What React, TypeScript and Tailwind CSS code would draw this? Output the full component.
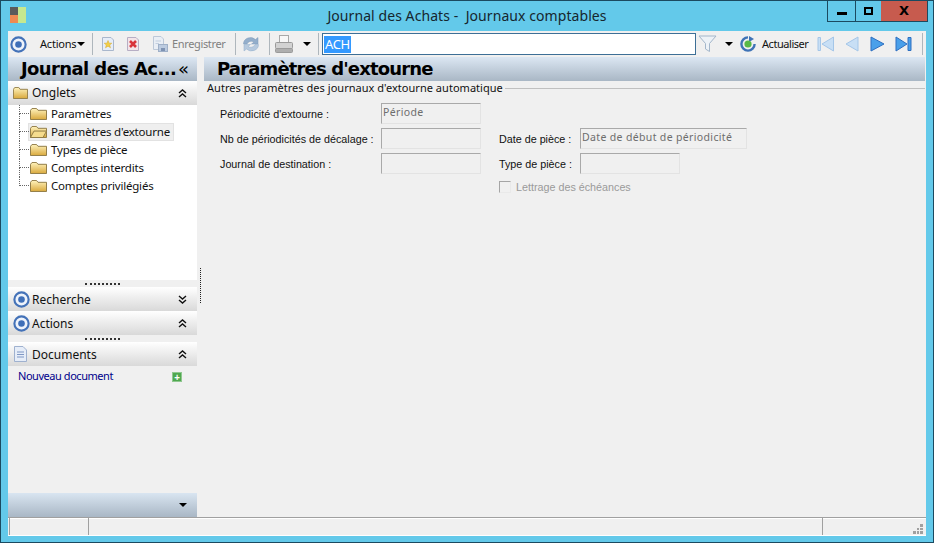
import React from "react";

const F = "font-['Noto_Sans','Liberation_Sans',sans-serif]";

function Target({ size = 17 }: { size?: number }) {
  return (
    <svg width={size} height={size} viewBox="0 0 16 16" className="shrink-0">
      <circle cx="8" cy="8" r="6.7" fill="#eef3fb" stroke="#4472b8" strokeWidth="2" />
      <circle cx="8" cy="8" r="3.1" fill="#3f6fb8" />
    </svg>
  );
}

function Folder({ open = false, w = 17, h = 12 }: { open?: boolean; w?: number; h?: number }) {
  return (
    <svg width={w} height={h} viewBox="0 0 17 13" preserveAspectRatio="none" className="shrink-0">
      <defs>
        <linearGradient id="fg" x1="0" y1="0" x2="0" y2="1">
          <stop offset="0" stopColor="#fff3bd" />
          <stop offset="1" stopColor="#d9a93d" />
        </linearGradient>
      </defs>
      <path d="M.5 2.5V12.5H16.5V2.5H8L6.5.5H2L.5 2.5Z" fill="url(#fg)" stroke="#8f7a45" />
      {open && <path d="M.5 12.5L4 5.5H16.5L13 12.5Z" fill="#f5dc8e" stroke="#8f7a45" />}
    </svg>
  );
}

function Chevrons({ down = false }: { down?: boolean }) {
  return (
    <svg width="9" height="9" viewBox="0 0 9 9" className={down ? "rotate-180" : ""}>
      <path d="M1 4L4.5 1L8 4M1 8L4.5 5L8 8" fill="none" stroke="#111" strokeWidth="1.4" />
    </svg>
  );
}

function Caret() {
  return <span className="block shrink-0 w-0 h-0 border-x-[4px] border-x-transparent border-t-[4px] border-t-black" />;
}

function Sep() {
  return <span className="block w-px h-[22px] bg-[#aeb6bc] shrink-0" />;
}

function NavIcon({ d, w, on }: { d: string; w: number; on?: boolean }) {
  return (
    <svg width={w} height="16" viewBox={`0 0 ${w} 16`} className="shrink-0">
      <path d={d} fill={on ? "#4aa0ea" : "#c8dff5"} stroke={on ? "#2e6fc0" : "#a4c6e8"} strokeWidth="1" />
    </svg>
  );
}

function Header({ icon, label, down, low = true }: { icon: React.ReactNode; label: string; down?: boolean; low?: boolean }) {
  return (
    <div className="h-6 shrink-0 flex items-center pl-[5px] pr-[10px] bg-gradient-to-b from-white to-[#d9d9d9] text-[12px] text-[#111]">
      <span className="w-[19px] flex">{icon}</span>
      <span className={`flex-1 ${low ? "pt-[2px]" : ""}`}>{label}</span>
      <Chevrons down={down} />
    </div>
  );
}

function Grip() {
  return (
    <div className="h-[7px] shrink-0 flex justify-center items-center">
      <div className="w-[35px] border-t-2 border-dotted border-[#333]" />
    </div>
  );
}

function TreeItem({ label, open, active, last }: { label: string; open?: boolean; active?: boolean; last?: boolean }) {
  return (
    <div className="h-[18px] flex items-center relative pl-[21px]">
      <div className="absolute left-[11px] top-0 w-[10px] h-[9px] border-l border-b border-dotted border-[#666]" />
      {!last && <div className="absolute left-[11px] top-[9px] h-[9px] border-l border-dotted border-[#666]" />}
      <div className={`flex items-center gap-[4px] h-[18px] pl-[1px] pr-[3px] ${active ? "bg-[#efefef] border border-[#e2e2e2] -ml-px" : ""}`}>
        <Folder open={open} />
        <span className="text-[11.5px] tracking-[-0.2px] text-[#111] whitespace-nowrap">{label}</span>
      </div>
    </div>
  );
}

function Field({ text, w = "w-[100px]" }: { text?: string; w?: string }) {
  return (
    <div className={`${w} h-[21px] bg-[#f0f0f0] border border-[#a9a9a9] border-r-[#e3e3e3] border-b-[#e3e3e3] px-[1px] text-[10.5px] tracking-[0.35px] text-[#6d6d6d] leading-[17px] whitespace-nowrap ${F}`}>
      {text}
    </div>
  );
}

export default function App() {
  return (
    <div className={`${F} w-[934px] h-[543px] bg-[#63c9ea] border border-[#1b4a60] flex flex-col overflow-hidden relative`}>
      {/* Title bar */}
      <div className="h-[30px] flex items-center relative shrink-0">
        <div className="ml-[9px] mb-[3px] w-4 h-4 grid grid-cols-2 grid-rows-2">
          <span className="bg-[#5b5b5b]" />
          <span className="bg-[#c6e88f] row-span-2" />
          <span className="bg-[#ef8a52]" />
        </div>
        <div className="absolute inset-x-0 top-[4px] text-center text-[14px] tracking-[0.07px] text-[#16262e]">
          Journal des Achats -&nbsp; Journaux comptables
        </div>
        <div className="absolute right-[5px] top-[-1px] flex h-[22px] border border-[#1b4a60] border-t-0">
          <div className="w-[28px] flex items-center justify-center border-r border-[#1b4a60]">
            <span className="w-[10px] h-[3px] bg-black mt-[5px]" />
          </div>
          <div className="w-[25px] flex items-center justify-center">
            <span className="w-[9px] h-[8px] border-2 border-black" />
          </div>
          <div className="w-[46px] flex items-center justify-center bg-[#c75b4e] text-[13px] font-bold text-black font-['DejaVu_Sans'] leading-none">
            X
          </div>
        </div>
      </div>

      {/* Toolbar */}
      <div className="mx-[7px] h-[26px] bg-[#f0f0f0] flex items-center shrink-0 pl-[2px] text-[11px] text-[#111]">
        <Target />
        <span className="ml-[13px] w-[36px] tracking-[-0.2px] whitespace-nowrap">Actions</span>
        <span className="ml-[1px] mr-[7px]"><Caret /></span>
        <Sep />
        <svg width="16" height="16" viewBox="0 0 16 16" className="ml-[7px] shrink-0">
          <path d="M2.5 1.5H11L13.5 4V14.5H2.5Z" fill="#e6edf8" stroke="#a9b7cc" />
          <path d="M8 4.5L9.1 7.2H11.8L9.7 9L10.5 11.8L8 10.2L5.5 11.8L6.3 9L4.2 7.2H6.9Z" fill="#f3cf45" stroke="#d7a92b" strokeWidth="0.5" />
        </svg>
        <svg width="16" height="16" viewBox="0 0 16 16" className="ml-[9px] shrink-0">
          <path d="M2.5 1.5H11L13.5 4V14.5H2.5Z" fill="#f3e4e8" stroke="#b7aec4" />
          <path d="M5 5L11 11M11 5L5 11" stroke="#d8323a" strokeWidth="2.6" />
        </svg>
        <svg width="16" height="16" viewBox="0 0 16 16" className="ml-[11px] shrink-0">
          <path d="M1.5 .5H9L11.5 3V13.5H1.5Z" fill="#e9eef5" stroke="#bcc8d8" />
          <path d="M3.5 5H9M3.5 7.5H7" stroke="#c3cfdf" />
          <rect x="6.5" y="8.5" width="9" height="7" fill="#bccbe0" stroke="#9fb0c8" />
          <rect x="9" y="12" width="4" height="3" fill="#7f93b3" />
        </svg>
        <span className="ml-[4px] w-[54px] text-[#808080] tracking-[-0.35px] whitespace-nowrap">Enregistrer</span>
        <span className="ml-[9px]"><Sep /></span>
        <svg width="18" height="18" viewBox="0 0 18 18" className="ml-[6px] shrink-0">
          <path d="M1.5 9A7 6.5 0 0 1 13.5 4.5L16 2.5V9H9.5L12 7A4.5 4 0 0 0 5 9Z" fill="#93aecb" stroke="#7d99b8" strokeWidth="0.5" />
          <path d="M16.5 9.5A7 6.5 0 0 1 4.5 14L2 16V9.5H8.5L6 11.5A4.5 4 0 0 0 13 9.5Z" fill="#b6c9de" stroke="#93aecb" strokeWidth="0.5" />
        </svg>
        <span className="ml-[9px]"><Sep /></span>
        <svg width="18" height="18" viewBox="0 0 18 18" className="ml-[5px] shrink-0">
          <rect x="4.5" y=".5" width="9" height="7" fill="#f7f7f7" stroke="#a8a8a8" />
          <rect x=".5" y="7.5" width="17" height="6" rx="1" fill="#d2d2d2" stroke="#9a9a9a" />
          <rect x=".5" y="13.5" width="17" height="4" rx="1" fill="#aeaeae" stroke="#9a9a9a" />
        </svg>
        <span className="ml-[10px]"><Caret /></span>
        <span className="ml-[7px]"><Sep /></span>
        <div className="ml-[3px] w-[374px] h-[22px] shrink-0 bg-white border border-[#3d6f96] flex items-center pl-[1px]">
          <span className="bg-[#3399ff] text-white text-[13px] leading-[17px] px-[1px] tracking-[-0.4px]">ACH</span>
        </div>
        <svg width="19" height="18" viewBox="0 0 19 18" className="ml-[2px] shrink-0">
          <path d="M1 1H18L11.5 8.5V16.5L7.5 14V8.5Z" fill="#edf2f7" stroke="#a3b6ca" />
        </svg>
        <span className="ml-[8px]"><Caret /></span>
        <svg width="16" height="16" viewBox="0 0 16 16" className="ml-[7px] shrink-0">
          <path d="M8 1.4A6.6 6.6 0 1 0 14.6 8" fill="none" stroke="#3f73b6" strokeWidth="2.4" />
          <path d="M9 0L14 3L9 6Z" fill="#3f73b6" />
          <circle cx="8" cy="8" r="3.6" fill="#58b947" />
        </svg>
        <span className="ml-[6px] w-[46px] tracking-[-0.45px] whitespace-nowrap">Actualiser</span>
        <span className="ml-[9px]"><NavIcon w={18} d="M1 1.5H3.5V14.5H1ZM16.5 1L5 8L16.5 15Z" /></span>
        <span className="ml-[10px]"><NavIcon w={14} d="M13 1L1 8L13 15Z" /></span>
        <span className="ml-[11px]"><NavIcon w={15} on d="M1 1L14 8L1 15Z" /></span>
        <span className="ml-[10px]"><NavIcon w={17} on d="M1 1L12 8L1 15ZM13 1.5H16V14.5H13Z" /></span>
        <span className="ml-[10px]"><Sep /></span>
      </div>

      {/* Body */}
      <div className="mx-[7px] flex-1 min-h-0 flex bg-[#f0f0f0]">
        <aside className="w-[189px] flex flex-col shrink-0">
          <div className="h-[24px] flex items-center pl-[13px] pr-[8px] bg-gradient-to-b from-[#dce7f3] to-[#a9b7c5] shrink-0">
            <span className="flex-1 text-[18px] font-bold text-black font-['DejaVu_Sans'] tracking-[-0.6px] whitespace-nowrap leading-none">Journal des Ac...</span>
            <span className="text-[18px] text-black leading-none font-['DejaVu_Sans']">«</span>
          </div>
          <Header icon={<Folder w={15} h={12} />} label="Onglets" low={false} />
          <div className="h-[175px] bg-white shrink-0">
            <TreeItem label="Paramètres" />
            <TreeItem label="Paramètres d'extourne" open active />
            <TreeItem label="Types de pièce" />
            <TreeItem label="Comptes interdits" />
            <TreeItem label="Comptes privilégiés" last />
          </div>
          <Grip />
          <Header icon={<Target />} label="Recherche" down />
          <Header icon={<Target />} label="Actions" />
          <Grip />
          <Header
            icon={
              <svg width="15" height="16" viewBox="0 0 15 16">
                <path d="M1.5 .5H10L13.5 4V15.5H1.5Z" fill="#e6edf8" stroke="#9fb1cf" />
                <path d="M4 6H11M4 8.5H11M4 11H11" stroke="#7f97c4" />
              </svg>
            }
            label="Documents"
          />
          <div className="h-[21px] flex items-center pl-[10px] pr-[15px] text-[11px] tracking-[-0.45px] text-[#00008b] shrink-0">
            <span className="flex-1">Nouveau document</span>
            <span className="w-[10px] h-[10px] bg-[#4fa84f] text-white text-[10px] font-bold leading-[9px] text-center border border-[#8fc78f]">+</span>
          </div>
          <div className="flex-1" />
          <div className="h-[24px] bg-gradient-to-b from-[#d9e5f1] to-[#a9b7c5] flex items-center justify-end pr-[10px] shrink-0">
            <Caret />
          </div>
        </aside>

        <div className="w-[7px] flex items-start justify-center shrink-0">
          <div className="mt-[211px] h-[35px] border-l border-dotted border-[#222]" />
        </div>

        <main className="flex-1 min-w-0 flex flex-col mr-[1px]">
          <div className="h-[24px] flex items-center pl-[13px] bg-gradient-to-b from-[#dce7f3] to-[#a9b7c5] shrink-0">
            <span className="text-[18px] font-bold text-black font-['DejaVu_Sans'] tracking-[-0.85px] leading-none">Paramètres d'extourne</span>
          </div>
          <div className="flex items-center ml-[3px] h-[15px] text-[11px] tracking-[0.03px] text-[#111]">
            <span className="whitespace-nowrap">Autres paramètres des journaux d'extourne automatique</span>
            <div className="flex-1 h-px bg-[#c0c0c0] ml-[2px]" />
          </div>
          <div className="ml-[16px] mt-[5px] grid grid-cols-[161px_118px_81px_auto] auto-rows-[25px] justify-start font-['Liberation_Sans'] text-[10.75px] text-[#111] items-center whitespace-nowrap">
            <span className="pt-[2px]">Périodicité d'extourne :</span>
            <Field text="Période" />
            <span />
            <span />
            <span className="pt-[2px]">Nb de périodicités de décalage :</span>
            <Field />
            <span className="pt-[2px]">Date de pièce :</span>
            <Field text="Date de début de périodicité" w="w-[167px]" />
            <span className="pt-[2px]">Journal de destination :</span>
            <Field />
            <span className="pt-[2px]">Type de pièce :</span>
            <Field />
          </div>
          <div className="ml-[295px] mt-[3px] h-[16px] flex items-center gap-[5px] font-['Liberation_Sans'] text-[10.75px] text-[#9a9a9a]">
            <span className="w-[12px] h-[12px] border border-[#a5a5a5] border-r-[#e9e9e9] border-b-[#e9e9e9] bg-[#f0f0f0]" />
            Lettrage des échéances
          </div>
        </main>
      </div>

      {/* Status */}
      <div className="mx-[7px] h-[19px] bg-[#f0f0f0] border-t border-[#a0a0a0] border-b border-b-white shadow-[inset_0_1px_0_#fff] flex shrink-0 relative">
        <div className="w-[80px] border-l border-[#a0a0a0] border-r ml-px" />
        <div className="flex-1" />
        <div className="w-[104px] border-l border-[#a0a0a0]" />
        <div className="absolute right-[3px] bottom-[1px] w-[10px] h-[10px] grid grid-cols-3 gap-[1px]">
          <span />
          <span />
          <span className="bg-[#a0a0a0]" />
          <span />
          <span className="bg-[#a0a0a0]" />
          <span className="bg-[#a0a0a0]" />
          <span className="bg-[#a0a0a0]" />
          <span className="bg-[#a0a0a0]" />
          <span className="bg-[#a0a0a0]" />
        </div>
      </div>
      <div className="h-[6px] shrink-0" />
    </div>
  );
}
